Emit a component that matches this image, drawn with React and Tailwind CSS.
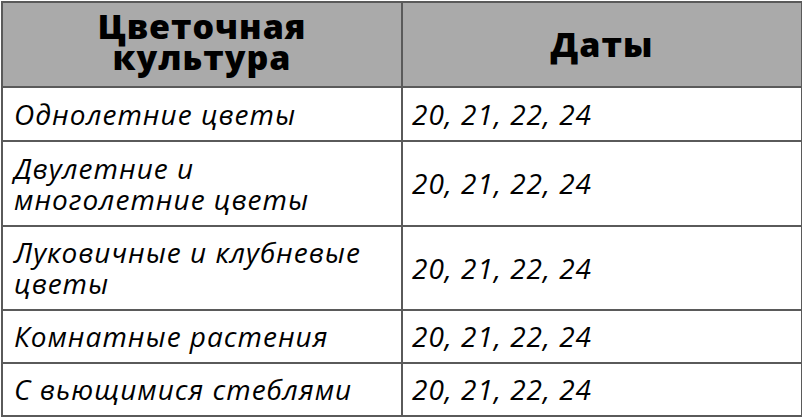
export default function App() {
  const rows = [
    { name: "Однолетние цветы", h: "h-[54px]" },
    { name: "Двулетние и многолетние цветы", h: "h-[85px]", br: ["Двулетние и", "многолетние цветы"] },
    { name: "Луковичные и клубневые цветы", h: "h-[84px]", br: ["Луковичные и клубневые", "цветы"] },
    { name: "Комнатные растения", h: "h-[53px]" },
    { name: "С вьющимися стеблями", h: "h-[53px]" },
  ];

  return (
    <div className="w-[802px] h-[417px] bg-white pl-px pt-px" style={{ fontFamily: '"Open Sans", sans-serif' }}>
      <table className="w-[800px] table-fixed border-collapse text-black">
        <colgroup>
          <col className="w-[400px]" />
          <col className="w-[400px]" />
        </colgroup>
        <thead>
          <tr className="h-[85px] bg-[#aaaaaa]">
            <th className="border-2 border-[#5a5a5a] text-[34px] leading-[31px] font-extrabold tracking-[1px] text-center align-middle pb-1.5">
              Цветочная
              <br />
              культура
            </th>
            <th className="border-2 border-[#5a5a5a] text-[34px] leading-[31px] font-extrabold tracking-[1px] text-center align-middle">
              Даты
            </th>
          </tr>
        </thead>
        <tbody>
          {rows.map((r) => (
            <tr key={r.name} className={r.h}>
              <td className="border-2 border-[#5a5a5a] px-[11px] italic text-[28px] leading-[31px] tracking-[1px] align-middle">
                {r.br ? (
                  <>
                    {r.br[0]}
                    <br />
                    {r.br[1]}
                  </>
                ) : (
                  r.name
                )}
              </td>
              <td className="border-2 border-[#5a5a5a] px-[9px] italic text-[28px] leading-[31px] tracking-[1px] align-middle">
                20, 21, 22, 24
              </td>
            </tr>
          ))}
        </tbody>
      </table>
    </div>
  );
}
